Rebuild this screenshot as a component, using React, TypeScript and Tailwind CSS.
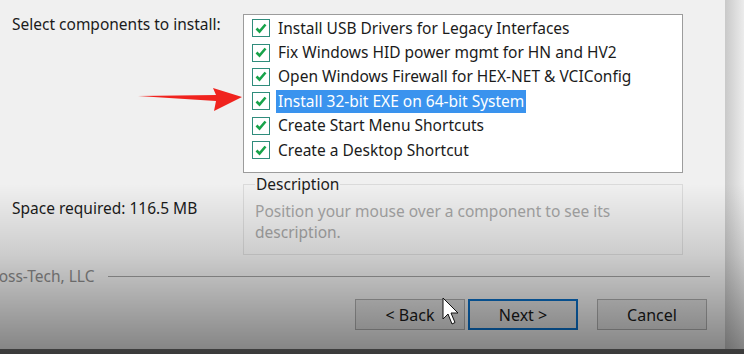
const items = [
  "Install USB Drivers for Legacy Interfaces",
  "Fix Windows HID power mgmt for HN and HV2",
  "Open Windows Firewall for HEX-NET & VCIConfig",
  "Install 32-bit EXE on 64-bit System",
  "Create Start Menu Shortcuts",
  "Create a Desktop Shortcut",
]

function Check() {
  return (
    <span className="flex h-[18px] w-[18px] shrink-0 items-center justify-center border border-[#2f8c7c] bg-white">
      <svg width="12" height="11" viewBox="0 0 12 11">
        <path d="M1.5 5.5 L4.5 8.5 L10.5 1.5" fill="none" stroke="#17a34a" strokeWidth="2.6" />
      </svg>
    </span>
  )
}

function Button({ label, primary }: { label: string; primary?: boolean }) {
  return (
    <div
      className={
        "flex h-[31px] w-[110px] items-center justify-center bg-[#e1e1e1] text-[16px] text-[#1a1a1a] " +
        (primary ? "border-2 border-[#0a6fc7]" : "border border-[#adadad]")
      }
    >
      {label}
    </div>
  )
}

export default function App() {
  return (
    <div
      className="relative h-[354px] w-[744px] overflow-hidden bg-[#6d6d6d]"
      style={{ fontFamily: '"Noto Sans", "Open Sans", sans-serif' }}
    >
      <div className="flex h-[349px]">
        <div className="flex w-[725px] flex-col bg-[#f0f0f0] text-[15.5px] text-[#1b1b1b]">
          <div className="flex pt-[14px]">
            <div className="w-[243px] pl-[12px] leading-[20px]">Select components to install:</div>
            <div className="h-[159px] w-[440px] border border-[#9c9c9c] bg-white pl-[8px] pt-[1px]">
              {items.map((t, i) => (
                <div key={t} className="flex h-[24.4px] items-center gap-[6px]">
                  <Check />
                  <span
                    className={
                      "px-[2px] leading-[23px] " + (i === 3 ? "bg-[#3a93ee] text-white" : "")
                    }
                  >
                    {t}
                  </span>
                </div>
              ))}
            </div>
          </div>

          <div className="mt-[2px] flex">
            <div className="w-[243px] pl-[12px] pt-[22px]">Space required: 116.5 MB</div>
            <fieldset className="h-[80px] w-[440px] border border-[#dadada] px-[11px]">
              <legend className="px-[1px] leading-[18px] text-[#1b1b1b]">Description</legend>
              <p className="mt-[8px] leading-[21px] text-[#a5a5a5]">
                Position your mouse over a component to see its
                <br />
                description.
              </p>
            </fieldset>
          </div>

          <div className="mt-[10px] flex items-center">
            <span className="-ml-[11px] text-[#8a8a8a]">Ross-Tech, LLC</span>
            <div className="ml-[14px] mr-[15px] h-px flex-1 bg-[#a0a0a0]" />
          </div>

          <div className="mt-[11px] flex pl-[355px]">
            <div className="flex gap-[3px]">
              <Button label="< Back" />
              <Button label="Next >" primary />
            </div>
            <div className="ml-[19px]">
              <Button label="Cancel" />
            </div>
          </div>
        </div>
        <div className="flex-1 bg-gradient-to-r from-[#c9c9c9] to-[#ececec]" />
      </div>

      {/* bottom vignette */}
      <div className="pointer-events-none absolute inset-0 bg-[linear-gradient(to_bottom,rgba(0,0,0,0)_0%,rgba(0,0,0,0)_52%,rgba(0,0,0,0.15)_72%,rgba(0,0,0,0.46)_100%)]" />

      {/* red arrow */}
      <svg className="absolute left-[136px] top-[86px]" width="108" height="26" viewBox="0 0 108 26">
        <path d="M2 10 L80 9 L77 2 L106 11 L78 25 L80 15 Z" fill="#f0231e" />
      </svg>

      {/* mouse cursor */}
      <svg className="absolute left-[442px] top-[297px]" width="20" height="30" viewBox="0 0 20 30">
        <path d="M1 1 L1 22 L6 17 L10 27 L13 25.5 L9 16 L16 16 Z" fill="white" stroke="#111" strokeWidth="1" strokeLinejoin="round" />
      </svg>
    </div>
  )
}
